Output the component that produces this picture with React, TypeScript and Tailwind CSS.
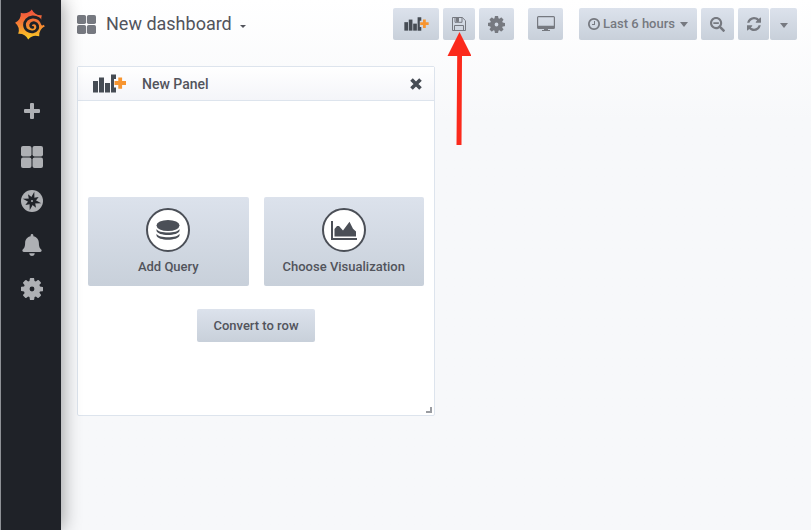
import type { ReactNode } from "react";
import { FaBell, FaSearchMinus } from "react-icons/fa";

const GEAR =
  "M1664 787v222q0 12-8 23t-20 13l-185 28q-19 54-39 91 35 50 107 138 10 12 10 25t-9 23q-27 37-99 108t-94 71q-12 0-26-9l-138-108q-44 23-91 38-16 136-29 186-7 28-36 28h-222q-14 0-24.5-8.5t-11.5-21.5l-28-184q-49-16-90-37l-141 107q-10 9-25 9-14 0-25-11-126-114-165-168-7-10-7-23 0-12 8-23 15-21 51-66.5t54-70.5q-27-50-41-99l-183-27q-13-2-21-12.5t-8-23.5v-222q0-12 8-23t19-13l186-28q14-46 39-92-40-57-107-138-10-12-10-24 0-10 9-23 26-36 98.5-107.5t94.5-71.5q13 0 26 10l138 107q44-23 91-38 16-136 29-186 7-28 36-28h222q14 0 24.5 8.5t11.5 21.5l28 184q49 16 90 37l142-107q9-9 24-9 13 0 25 10 129 119 165 170 7 8 7 22 0 12-8 23-15 21-51 66.5t-54 70.5q26 50 41 98l183 28q13 2 21 12.5t8 23.5z";
const GEAR_HOLE = "M896 726a170 170 0 1 0 0 340a170 170 0 1 0 0-340z";
const REFRESH =
  "M1639 1056q0 5-1 7-64 268-268 434.5t-478 166.5q-146 0-282.5-55t-243.5-157l-129 129q-19 19-45 19t-45-19-19-45v-448q0-26 19-45t45-19h448q26 0 45 19t19 45-19 45l-137 137q71 66 161 102t187 36q134 0 250-65t186-179q11-17 53-117 8-23 30-23h192q13 0 22.5 9.5t9.5 22.5zm25-800v448q0 26-19 45t-45 19h-448q-26 0-45-19t-19-45 19-45l138-138q-148-137-349-137-134 0-250 65t-186 179q-11 17-53 117-8 23-30 23h-199q-13 0-22.5-9.5t-9.5-22.5v-7q65-268 270-434.5t480-166.5q146 0 284 55.5t245 156.5l130-129q19-19 45-19t45 19 19 45z";
const CLOCK =
  "M1024 544v448q0 14-9 23t-23 9h-320q-14 0-23-9t-9-23v-64q0-14 9-23t23-9h224v-352q0-14 9-23t23-9h64q14 0 23 9t9 23zm416 352q0-148-73-273t-198-198-273-73-273 73-198 198-73 273 73 273 198 198 273 73 273-73 198-198 73-273zm224 0q0 209-103 385.5t-279.5 279.5-385.5 103-385.5-103-279.5-279.5-103-385.5 103-385.5 279.5-279.5 385.5-103 385.5 103 279.5 279.5 103 385.5z";

function Glyph({ d, className }: { d: string; className: string }) {
  return (
    <svg viewBox="128 128 1536 1536" className={className} fill="currentColor" aria-hidden="true">
      <path d={d} fillRule="evenodd" />
    </svg>
  );
}

function Logo() {
  return (
    <svg viewBox="0 0 30 32" className="h-8 w-[30px]" aria-hidden="true">
      <defs>
        <linearGradient id="flame" x1="0" y1="0" x2="0" y2="1">
          <stop offset="0" stopColor="#f0503e" />
          <stop offset="0.450" stopColor="#f47a35" />
          <stop offset="1" stopColor="#fbd124" />
        </linearGradient>
      </defs>
      <path
        fill="url(#flame)"
        d="M16.800.6Q19.900 6.800 26.800 6.300Q24.600 12.800 29.900 17.300Q23.700 20.400 24.200 27.300Q17.700 25.100 13.200 30.400Q10.100 24.200 3.200 24.700Q5.400 18.200.1 13.700Q6.300 10.600 5.800 3.700Q12.300 5.900 16.800.6Z"
      />
      <path
        fill="none"
        stroke="#1f2228"
        strokeWidth="2.8"
        strokeLinecap="round"
        d="M27.500 15C26 10 21.500 7.800 17.500 8C12.500 8.300 9.500 12 9.500 16C9.800 21 14 23.300 18 22.800C22 22.300 23.300 19 22.500 16.500C21.500 13.500 18 13 16.300 14.800C15 16.300 15.800 18.500 17.800 18.300"
      />
    </svg>
  );
}

function Tiles({ className }: { className: string }) {
  return (
    <svg viewBox="0 0 22 22" className={className} fill="currentColor" aria-hidden="true">
      <rect x="0" y="0" width="10.5" height="10.5" rx="2" />
      <rect x="11.5" y="0" width="10.5" height="10.5" rx="2" />
      <rect x="0" y="11.5" width="10.5" height="10.5" rx="2" />
      <rect x="11.5" y="11.5" width="10.5" height="10.5" rx="2" />
    </svg>
  );
}

function Compass() {
  return (
    <svg viewBox="0 0 22 22" className="size-[22px]" aria-hidden="true">
      <circle cx="11" cy="11" r="11" fill="currentColor" />
      <g fill="#1f2228" transform="rotate(14 11 11)">
        <path d="M11 1.500 13 9 20.500 11 13 13 11 20.500 9 13 1.500 11 9 9Z" />
        <path d="M5.500 5.500 11 8 16.500 5.500 14 11 16.500 16.500 11 14 5.500 16.500 8 11Z" />
      </g>
      <circle cx="11" cy="11" r="1" fill="currentColor" />
    </svg>
  );
}

function AddPanelIcon({ className }: { className: string }) {
  return (
    <svg viewBox="0 0 33 19" className={className} aria-hidden="true">
      <g fill="#464c54">
        <rect x="0" y="7" width="5" height="11.5" />
        <rect x="6" y="3.500" width="5" height="15" />
        <rect x="12" y="9" width="5" height="9.5" />
        <path d="M18 .5h5v4.500h-2v8.500h2v5H18Z" />
      </g>
      <path d="M25.300 3.500h3.800v3.600H33v3.800h-3.900v3.900h-3.800v-3.900h-3.800V7.100h3.800Z" fill="#f79530" />
    </svg>
  );
}

function Caret({ className }: { className: string }) {
  return (
    <svg viewBox="0 0 8 4" className={className} fill="currentColor" preserveAspectRatio="none" aria-hidden="true">
      <path d="M0 0h8L4 4Z" />
    </svg>
  );
}

function ToolButton({ label, width, children }: { label: string; width: string; children: ReactNode }) {
  return (
    <button
      aria-label={label}
      className={`flex h-8 items-center justify-center rounded-xs bg-linear-to-b from-[#dce2ec] to-[#c8d0da] text-[#767980] ${width}`}
    >
      {children}
    </button>
  );
}

function BigButton({ label, icon }: { label: string; icon: ReactNode }) {
  return (
    <button className="flex h-[89px] flex-1 flex-col items-center rounded-xs bg-linear-to-b from-[#dce2ec] to-[#c8d0da] pt-[11px] text-[#52545c]">
      <span className="flex size-11 items-center justify-center rounded-full border-2 border-[#4b4f57] bg-white text-[#4b4f57]">
        {icon}
      </span>
      <span className="mt-[5px] text-[13px] leading-5 font-medium">{label}</span>
    </button>
  );
}

function Sidebar() {
  return (
    <nav className="z-10 flex w-[61px] shrink-0 flex-col items-center border-l border-[#8e9196] bg-[#1f2228] pt-[9px] pl-px text-[#aeb0b4] shadow-[0_0_20px_#00000070]">
      <a href="#home" aria-label="Home" className="mr-1">
        <Logo />
      </a>
      <div className="mt-[59px] flex flex-col items-center gap-[22px]">
        <a href="#create" aria-label="Create" className="flex size-[22px] items-center justify-center">
          <svg viewBox="0 0 16 16" className="size-4" fill="currentColor" aria-hidden="true">
            <path d="M6 1a1 1 0 0 1 1-1h2a1 1 0 0 1 1 1v5h5a1 1 0 0 1 1 1v2a1 1 0 0 1-1 1h-5v5a1 1 0 0 1-1 1H7a1 1 0 0 1-1-1v-5H1a1 1 0 0 1-1-1V7a1 1 0 0 1 1-1h5Z" />
          </svg>
        </a>
        <a href="#dashboards" aria-label="Dashboards" className="mt-0.5">
          <Tiles className="size-[22px]" />
        </a>
        <a href="#explore" aria-label="Explore">
          <Compass />
        </a>
        <a href="#alerting" aria-label="Alerting">
          <FaBell className="size-[22px]" />
        </a>
        <a href="#configuration" aria-label="Configuration">
          <Glyph d={GEAR + GEAR_HOLE} className="size-[22px]" />
        </a>
      </div>
    </nav>
  );
}

function Toolbar() {
  return (
    <header className="flex h-12 items-center justify-between pr-[14px] pl-4">
      <button className="flex items-center text-[#52545c]">
        <Tiles className="size-[19px] text-[#767980]" />
        <span className="ml-[10px] text-lg leading-6">New dashboard</span>
        <Caret className="mt-[5px] ml-2 h-[3px] w-[6px]" />
      </button>
      <div className="flex items-center gap-1">
        <ToolButton label="Add panel" width="w-[46px]">
          <AddPanelIcon className="h-[14px] w-[25px]" />
        </ToolButton>
        <div className="relative">
          <ToolButton label="Save dashboard" width="w-8">
            <svg viewBox="0 0 14 14" className="size-[14px]" fill="none" stroke="currentColor" aria-hidden="true">
              <path d="M.5.5h9.800l3.200 3.200v9.800H.5Z" />
              <path d="M3 .5v4.800h7V.5M2.500 13.500V8.500h9v5" />
              <path d="M4.500 1v3.500h2V1" fill="currentColor" />
            </svg>
          </ToolButton>
          <svg
            viewBox="0 0 24 114"
            className="pointer-events-none absolute top-6 left-1 z-10 h-[114px] w-6"
            fill="#fb2a1c"
            aria-hidden="true"
          >
            <path d="M12.500 0 24.500 24H15L14.500 113H9.500L10.200 24H.5Z" />
          </svg>
        </div>
        <ToolButton label="Dashboard settings" width="w-[35px]">
          <Glyph d={GEAR + GEAR_HOLE} className="size-[17px]" />
        </ToolButton>
        <div className="ml-[10px]">
          <ToolButton label="Cycle view mode" width="w-[35px]">
            <svg viewBox="0 0 18 16" className="h-4 w-[18px]" fill="currentColor" aria-hidden="true">
              <path
                fillRule="evenodd"
                d="M1.500 0h15A1.500 1.500 0 0 1 18 1.500v10a1.500 1.500 0 0 1-1.500 1.500h-15A1.500 1.500 0 0 1 0 11.500v-10A1.500 1.500 0 0 1 1.500 0ZM1.200 1.200v8.600h15.600V1.200Z"
              />
              <path d="M7 13h4v1h2v1H5v-1h2Z" />
            </svg>
          </ToolButton>
        </div>
        <div className="ml-3">
          <ToolButton label="Last 6 hours" width="w-[118px]">
            <Glyph d={CLOCK} className="size-3" />
            <span className="ml-[3px] text-[13px] leading-5 font-medium">Last 6 hours</span>
            <Caret className="ml-[5px] h-[5px] w-2" />
          </ToolButton>
        </div>
        <ToolButton label="Zoom out" width="w-[33px]">
          <FaSearchMinus className="size-[15px]" />
        </ToolButton>
        <div className="flex gap-px">
          <ToolButton label="Refresh" width="w-[31px]">
            <Glyph d={REFRESH} className="size-[14px]" />
          </ToolButton>
          <ToolButton label="Refresh interval" width="w-[27px]">
            <Caret className="mt-0.5 h-[5px] w-2" />
          </ToolButton>
        </div>
      </div>
    </header>
  );
}

function NewPanel() {
  return (
    <section className="rounded-xs border border-[#dde4ed] bg-white">
      <div className="flex h-[34px] items-center border-b border-[#dde4ed] bg-linear-to-b from-white to-[#f4f5f9] pr-3 pl-[15px]">
        <AddPanelIcon className="h-[19px] w-[33px]" />
        <h2 className="ml-4 flex-1 text-sm leading-5 font-medium text-[#52545c]">New Panel</h2>
        <button aria-label="Close panel" className="text-[#464c54]">
          <svg viewBox="0 0 12 12" className="size-3" stroke="currentColor" strokeWidth="3.6" aria-hidden="true">
            <path d="M1.500 1.500 10.500 10.500M10.500 1.500 1.500 10.500" />
          </svg>
        </button>
      </div>
      <div className="flex flex-col items-center px-[10px] pt-24">
        <div className="flex w-full gap-[15px]">
          <BigButton
            label="Add Query"
            icon={
              <svg viewBox="0 0 24 22" className="h-[22px] w-6" fill="currentColor" aria-hidden="true">
                <ellipse cx="12" cy="6.500" rx="11.500" ry="5.500" />
                <path d="M.5 10c2 4.800 21 4.800 23 0v1.800c-1 5.600-22 5.600-23 0Z" />
                <path d="M.5 14.700c2 4.800 21 4.800 23 0v1.800c-1 5.600-22 5.600-23 0Z" />
              </svg>
            }
          />
          <BigButton
            label="Choose Visualization"
            icon={
              <svg viewBox="0 0 26 19" className="h-[19px] w-[26px]" fill="currentColor" aria-hidden="true">
                <path d="M0 0h2v17H26v2H0Z" />
                <path d="M3.500 15.500V8l2.500-3h2l4 4.500L18.500.8l3.500 7 3 2.700v5Z" />
              </svg>
            }
          />
        </div>
        <button className="mt-[23px] h-[33px] rounded-xs bg-linear-to-b from-[#dce2ec] to-[#c8d0da] px-4 text-[13px] leading-5 font-medium text-[#52545c]">
          Convert to row
        </button>
      </div>
      <div className="flex h-[73px] items-end justify-end pr-0.5 pb-0.5">
        <span className="size-[6px] border-r-2 border-b-2 border-[#9a9ca1]" />
      </div>
    </section>
  );
}

export default function App() {
  return (
    <div className="flex min-h-screen font-[Roboto,sans-serif]">
      <Sidebar />
      <main className="min-w-0 flex-1 bg-linear-to-b from-white to-[#f7f8fa] to-[120px]">
        <Toolbar />
        <div className="grid grid-cols-2 gap-0.5 px-4 pt-[18px]">
          <NewPanel />
        </div>
      </main>
    </div>
  );
}
